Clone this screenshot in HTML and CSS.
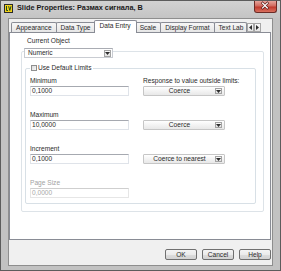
FILE: index.html
```html
<!DOCTYPE html>
<html>
<head>
<meta charset="utf-8">
<link rel="stylesheet" href="styles.css">
</head>
<body>
<div class="window">
  <div class="titlebar">
    <svg class="appicon" width="9" height="9" viewBox="0 0 9 9">
      <rect x="0.5" y="0.5" width="8" height="8" fill="#f2d21a" stroke="#2a2a2a"/>
      <path d="M2.5 2 V6.5 H4" fill="none" stroke="#1f4a1f" stroke-width="1"/>
      <path d="M4.6 2.2 L5.8 6.5 L7 2.2" fill="none" stroke="#1f4a1f" stroke-width="1"/>
    </svg>
    <span class="title">Slide Properties: Размах сигнала, В</span>
    <div class="close">
      <svg width="23" height="12" viewBox="0 0 23 12">
        <path d="M9 3 L14 8 M14 3 L9 8" stroke="#5a1a16" stroke-width="2.6" stroke-linecap="square"/>
        <path d="M9 3 L14 8 M14 3 L9 8" stroke="#ffffff" stroke-width="1.4" stroke-linecap="square"/>
      </svg>
    </div>
  </div>
  <div class="client">
    <div class="tabstrip">
      <div class="tab">Appearance</div>
      <div class="tab">Data Type</div>
      <div class="tab active">Data Entry</div>
      <div class="tab">Scale</div>
      <div class="tab">Display Format</div>
      <div class="tab clipped">Text Lab</div>
      <div class="tabarrow">
        <svg width="3" height="5" viewBox="0 0 3 5"><polygon points="3,0 3,5 0,2.5" fill="#2d2d2d"/></svg>
      </div>
      <div class="tabarrow">
        <svg width="3" height="5" viewBox="0 0 3 5"><polygon points="0,0 0,5 3,2.5" fill="#2d2d2d"/></svg>
      </div>
    </div>
    <div class="panel">
      <div class="head">
        <div class="label">Current Object</div>
        <div class="objcombo">
          <span class="objtext">Numeric</span>
          <span class="ddbtn">
            <svg width="5" height="3" viewBox="0 0 5 3"><polygon points="0,0 5,0 2.5,3" fill="#2d2d2d"/></svg>
          </span>
        </div>
      </div>
      <div class="outer">
        <div class="inner">
          <div class="caption"><span class="checkbox"></span>Use Default Limits</div>
          <div class="grid">
            <div class="cell">
              <div class="flabel">Minimum</div>
              <div class="textbox">0,1000</div>
            </div>
            <div class="cell">
              <div class="flabel">Response to value outside limits:</div>
              <div class="ring"><span class="ringtext">Coerce</span><span class="ddbtn small"><svg width="5" height="3" viewBox="0 0 5 3"><polygon points="0,0 5,0 2.5,3" fill="#2d2d2d"/></svg></span></div>
            </div>
            <div class="cell">
              <div class="flabel">Maximum</div>
              <div class="textbox">10,0000</div>
            </div>
            <div class="cell">
              <div class="flabel"></div>
              <div class="ring"><span class="ringtext">Coerce</span><span class="ddbtn small"><svg width="5" height="3" viewBox="0 0 5 3"><polygon points="0,0 5,0 2.5,3" fill="#2d2d2d"/></svg></span></div>
            </div>
            <div class="cell">
              <div class="flabel">Increment</div>
              <div class="textbox">0,1000</div>
            </div>
            <div class="cell">
              <div class="flabel"></div>
              <div class="ring"><span class="ringtext">Coerce to nearest</span><span class="ddbtn small"><svg width="5" height="3" viewBox="0 0 5 3"><polygon points="0,0 5,0 2.5,3" fill="#2d2d2d"/></svg></span></div>
            </div>
            <div class="cell">
              <div class="flabel disabled">Page Size</div>
              <div class="textbox disabled">0,0000</div>
            </div>
            <div class="cell"></div>
          </div>
        </div>
      </div>
    </div>
    <div class="buttons">
      <div class="btn">OK</div>
      <div class="btn">Cancel</div>
      <div class="btn">Help</div>
    </div>
  </div>
</div>
</body>
</html>
```

FILE: styles.css
```css
html, body {
  margin: 0;
  padding: 0;
}
body {
  width: 281px;
  height: 271px;
  overflow: hidden;
  font-family: "Liberation Sans", Arial, sans-serif;
  font-size: 6.6px;
  color: #2a2a2a;
}
.window {
  box-sizing: border-box;
  width: 281px;
  height: 271px;
  background: #c2c2c2;
  border: 1px solid #5c5c5c;
  display: flex;
  flex-direction: column;
}
.titlebar {
  height: 17px;
  flex: none;
  display: flex;
  align-items: flex-start;
  background: linear-gradient(#d2d2d2, #c4c4c4);
}
.appicon {
  margin: 3px 0 0 3px;
  flex: none;
}
.title {
  margin: 2px 0 0 4px;
  font-size: 7.3px;
  font-weight: bold;
  line-height: 9px;
  color: #1a1a1a;
  white-space: nowrap;
}
.close {
  margin-left: auto;
  margin-right: 3px;
  width: 23px;
  height: 12px;
  box-sizing: border-box;
  border: 1px solid #6b2b26;
  border-top: none;
  border-radius: 0 0 3px 3px;
  background: linear-gradient(#e7a49b, #d06a5e 45%, #c0392d 55%, #d9715f);
  display: flex;
}
.close svg {
  margin: -1px 0 0 -1px;
}
.client {
  box-sizing: border-box;
  margin: 0 7px;
  height: 248px;
  flex: none;
  background: #f0f0f0;
  border: 1px solid #8e8e8e;
  display: flex;
  flex-direction: column;
}
.tabstrip {
  margin-top: 1px;
  height: 12px;
  padding-left: 2px;
  display: flex;
  align-items: flex-end;
}
.tab {
  box-sizing: border-box;
  height: 10px;
  margin-left: -1px;
  padding: 0 4px;
  border: 1px solid #898c95;
  border-bottom: none;
  border-radius: 2px 2px 0 0;
  background: linear-gradient(#f6f6f6, #e6e6e6);
  line-height: 9px;
  white-space: nowrap;
  flex: none;
}
.tab:first-child {
  margin-left: 0;
}
.tab.active {
  height: 13px;
  margin: 0 -1px -1px -2px;
  padding: 0 5px;
  background: #ffffff;
  line-height: 10px;
  position: relative;
  z-index: 1;
}
.tab.clipped {
  width: 33px;
  overflow: hidden;
  padding-right: 0;
}
.tabarrow {
  box-sizing: border-box;
  width: 7px;
  height: 9px;
  border: 1px solid #a6a6a6;
  background: linear-gradient(#f8f8f8, #e4e4e4);
  display: flex;
  align-items: center;
  justify-content: center;
  flex: none;
}
.panel {
  box-sizing: border-box;
  height: 208px;
  margin-right: 1px;
  border: 1px solid #898c95;
  background: #ffffff;
  flex: none;
}
.head {
  padding: 4px 0 0 14px;
}
.label {
  padding-left: 3px;
  line-height: 8px;
}
.objcombo {
  box-sizing: border-box;
  margin-top: 3px;
  width: 89px;
  height: 10px;
  border: 1px solid #c9ccd2;
  border-top-color: #a9acb3;
  background: #ffffff;
  display: flex;
  align-items: center;
  position: relative;
  z-index: 1;
}
.objtext {
  padding-left: 3px;
  line-height: 8px;
  flex: 1;
}
.ddbtn {
  box-sizing: border-box;
  width: 7px;
  height: 7px;
  margin-right: 1px;
  border: 1px solid #a3a3a3;
  background: linear-gradient(#fafafa, #e2e2e2);
  display: flex;
  align-items: center;
  justify-content: center;
  flex: none;
}
.ddbtn.small {
  height: 6px;
  margin-right: 2px;
}
.outer {
  box-sizing: border-box;
  width: 243px;
  height: 161px;
  margin: -7px 0 0 11px;
  border: 1px solid #dde3e8;
  border-radius: 2px;
  padding: 16px 7px 7px 3px;
}
.inner {
  box-sizing: border-box;
  width: 231px;
  height: 136px;
  border: 1px solid #d8e0e6;
  border-radius: 2px;
}
.caption {
  display: flex;
  align-items: center;
  width: max-content;
  margin: -5px 0 0 4px;
  padding: 0 1px;
  background: #ffffff;
  line-height: 8px;
}
.checkbox {
  box-sizing: border-box;
  width: 6px;
  height: 6px;
  margin-right: 1px;
  border: 1px solid #8f8f8f;
  background: linear-gradient(135deg, #dcdcdc, #f8f8f8);
}
.grid {
  margin-top: 5px;
  padding-left: 4px;
  display: grid;
  grid-template-columns: 99px 82px;
  column-gap: 14px;
  row-gap: 15px;
}
.cell {
  height: 19px;
}
.flabel {
  height: 8px;
  line-height: 8px;
  white-space: nowrap;
}
.flabel.disabled {
  color: #a2a2a2;
}
.textbox {
  box-sizing: border-box;
  margin-top: 1px;
  height: 10px;
  border: 1px solid #dfe3e9;
  border-top-color: #a6a9b0;
  padding-left: 1px;
  line-height: 8px;
  background: #ffffff;
}
.textbox.disabled {
  color: #a8a8a8;
  border-color: #e6e6e6;
  border-top-color: #cfcfcf;
}
.ring {
  box-sizing: border-box;
  margin-top: 1px;
  height: 10px;
  border: 1px solid #c6c6c6;
  border-radius: 1px;
  background: linear-gradient(#ffffff, #f3f3f3 50%, #e8e8e8);
  display: flex;
  align-items: center;
}
.ringtext {
  flex: 1;
  text-align: center;
  line-height: 8px;
  white-space: nowrap;
}
.buttons {
  margin-top: 9px;
  padding-right: 1px;
  display: flex;
  justify-content: flex-end;
  gap: 5px;
}
.btn {
  box-sizing: border-box;
  width: 32px;
  height: 11px;
  border: 1px solid #707070;
  border-radius: 2px;
  background: linear-gradient(#f4f4f4, #ebebeb 50%, #dddddd 51%, #d2d2d2);
  text-align: center;
  line-height: 9px;
}
```
